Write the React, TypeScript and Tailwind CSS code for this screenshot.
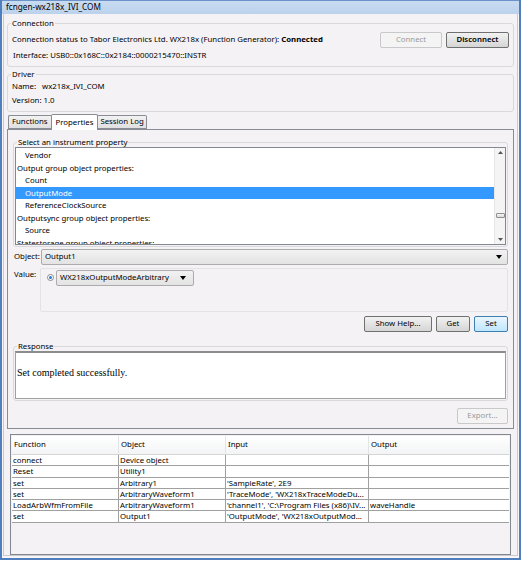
import React from 'react';

const font = { fontFamily: '"Noto Sans", "Liberation Sans", sans-serif' };

function Btn({ children, disabled, primary, className = '' }: { children: React.ReactNode; disabled?: boolean; primary?: boolean; className?: string }) {
    const base = 'h-[16px] rounded-[2px] border text-[7.8px] flex items-center justify-center';
    const look = disabled
        ? 'border-[#c9c9c9] bg-[#f4f4f4] text-[#9a9a9a]'
        : primary
          ? 'border-[#3c7fb1] bg-gradient-to-b from-[#eaf6fd] to-[#bee6fd] text-black'
          : 'border-[#707070] bg-gradient-to-b from-[#f2f2f2] to-[#d5d5d5] text-black';
    return <div className={`${base} ${look} ${className}`}>{children}</div>;
}

function Caret() {
    return (
        <svg width="6" height="4" viewBox="0 0 6 4">
            <path d="M0 0h6L3 4z" fill="#000" />
        </svg>
    );
}

const listItems: { text: string; indent?: boolean; selected?: boolean }[] = [
    { text: 'Vendor', indent: true },
    { text: 'Output group object properties:' },
    { text: 'Count', indent: true },
    { text: 'OutputMode', indent: true, selected: true },
    { text: 'ReferenceClockSource', indent: true },
    { text: 'Outputsync group object properties:' },
    { text: 'Source', indent: true },
    { text: 'Statestorage group object properties:' },
];

const rows = [
    ['connect', 'Device object', '', ''],
    ['Reset', 'Utility1', '', ''],
    ['set', 'Arbitrary1', "'SampleRate', 2E9", ''],
    ['set', 'ArbitraryWaveform1', "'TraceMode', 'WX218xTraceModeDu...", ''],
    ['LoadArbWfmFromFile', 'ArbitraryWaveform1', "'channel1', 'C:\\Program Files (x86)\\IV...", 'waveHandle'],
    ['set', 'Output1', "'OutputMode', 'WX218xOutputMod...", ''],
];

export default function App() {
    return (
        <div className="w-[523px] h-[562px] bg-white" style={font}>
            <div className="w-[521px] h-[560px] border-2 border-t-0 border-[#4f7fbf] bg-[#f8f6f9] flex flex-col">
                {/* title bar */}
                <div className="h-[15px] bg-gradient-to-b from-[#c8dbf1] to-[#bcd2ec] border-t border-[#6b93c9] flex items-center pl-[4px] text-[8.2px] text-black">
                    fcngen-wx218x_IVI_COM
                </div>

                <div className="flex-1 mx-px mb-[2px] bg-[#f4f2f4] border border-[#c9c9cc] border-t-0 flex flex-col px-[3px] text-[7.8px] text-black">
                    {/* Connection */}
                    <fieldset className="mt-[4px] border border-[#d9d9dc] rounded-[3px] px-[4px] pb-[3px] h-[49px]">
                        <legend className="px-px ml-[-1px] leading-[10px]">Connection</legend>
                        <div className="flex items-center h-[19px] mt-[2px]">
                            <div className="flex-1">
                                Connection status to Tabor Electronics Ltd. WX218x (Function Generator): <b>Connected</b>
                            </div>
                            <Btn disabled className="w-[62px]">Connect</Btn>
                            <Btn className="w-[63px] ml-[4px] font-semibold">Disconnect</Btn>
                        </div>
                        <div className="h-[14px] flex items-center pl-px">Interface: USB0::0x168C::0x2184::0000215470::INSTR</div>
                    </fieldset>

                    {/* Driver */}
                    <fieldset className="mt-[2px] border border-[#d9d9dc] rounded-[3px] px-[4px] h-[43px]">
                        <legend className="px-px ml-[-1px] leading-[10px]">Driver</legend>
                        <div className="h-[14px] mt-px flex items-center">
                            <span className="w-[30px] shrink-0">Name:</span>wx218x_IVI_COM
                        </div>
                        <div className="h-[13px] flex items-center">Version: 1.0</div>
                    </fieldset>

                    {/* Tabs */}
                    <div className="flex items-end h-[17px] pl-[1px]">
                        <div className="h-[14px] px-[3px] border border-[#898c95] border-r-0 rounded-tl-[2px] bg-gradient-to-b from-[#f2f2f2] to-[#e0e0e0] flex items-center">Functions</div>
                        <div className="h-[16px] px-[4px] border border-[#898c95] border-b-0 rounded-t-[2px] bg-white flex items-center z-10 -mb-px">Properties</div>
                        <div className="h-[14px] px-[2px] border border-[#898c95] border-l-0 rounded-tr-[2px] bg-gradient-to-b from-[#f2f2f2] to-[#e0e0e0] flex items-center">Session Log</div>
                    </div>
                    <div className="h-[300px] border border-[#898c95] bg-[#f4f2f4] px-[5px] flex flex-col">
                        <fieldset className="border border-[#d9d9dc] rounded-[3px] px-px mt-[7px] pb-px">
                            <legend className="px-px ml-[2px] leading-[10px]">Select an instrument property</legend>
                            <div className="h-[98px] border border-[#828790] bg-white flex overflow-hidden">
                                <div className="flex-1 overflow-hidden">
                                    {listItems.map((it, i) => (
                                        <div
                                            key={i}
                                            className={`h-[12.5px] leading-[12.5px] whitespace-nowrap ${it.indent ? 'pl-[9px]' : 'pl-[1px]'} ${it.selected ? 'bg-[#3399ff] text-white' : ''} ${i === 0 ? 'mt-px' : ''}`}
                                        >
                                            {it.text}
                                        </div>
                                    ))}
                                </div>
                                <div className="w-[11px] bg-[#f4f4f4] border-l border-[#e6e6e6] flex flex-col items-center justify-between py-[3px]">
                                    <svg width="5" height="3" viewBox="0 0 5 3"><path d="M0 3h5L2.5 0z" fill="#555" /></svg>
                                    <div className="flex-1 flex items-end pb-[20px]">
                                        <div className="w-[9px] h-[5px] border border-[#8f8f8f] rounded-[1px] bg-gradient-to-b from-[#f6f6f6] to-[#dadada]" />
                                    </div>
                                    <svg width="5" height="3" viewBox="0 0 5 3"><path d="M0 0h5L2.5 3z" fill="#555" /></svg>
                                </div>
                            </div>
                        </fieldset>

                        <div className="flex items-center mt-[2px] h-[16px]">
                            <span className="w-[28px] pl-px">Object:</span>
                            <div className="flex-1 h-[16px] border border-[#acacac] rounded-[2px] bg-gradient-to-b from-[#f2f2f2] to-[#e3e3e3] flex items-center justify-between pl-[3px] pr-[5px]">
                                <span>Output1</span>
                                <Caret />
                            </div>
                        </div>

                        <div className="flex mt-[3px]">
                            <span className="w-[27px] pl-px pt-[1px]">Value:</span>
                            <div className="flex-1 h-[44px] border border-[#e3e3e6] rounded-[2px] flex items-start pt-px pl-[6px]">
                                <div className="h-[15px] flex items-center">
                                    <div className="w-[7px] h-[7px] rounded-full border border-[#8a8a8a] bg-white flex items-center justify-center">
                                        <div className="w-[3px] h-[3px] rounded-full bg-[#1e7fd9]" />
                                    </div>
                                </div>
                                <div className="ml-[2px] w-[138px] h-[16px] border border-[#acacac] rounded-[2px] bg-gradient-to-b from-[#f2f2f2] to-[#e3e3e3] flex items-center justify-between pl-[3px] pr-[7px]">
                                    <span>WX218xOutputModeArbitrary</span>
                                    <Caret />
                                </div>
                            </div>
                        </div>

                        <div className="flex justify-end mt-[4px] gap-[4px]">
                            <Btn className="w-[68px]">Show Help...</Btn>
                            <Btn className="w-[34px]">Get</Btn>
                            <Btn primary className="w-[34px]">Set</Btn>
                        </div>

                        <fieldset className="border border-[#d9d9dc] rounded-[3px] px-px mt-[9px] pb-px">
                            <legend className="px-px ml-[2px] leading-[10px]">Response</legend>
                            <div className="h-[48px] border border-[#a0a0a0] border-t-[2px] border-t-[#8c8c8c] bg-white pt-[12px] pl-px text-[10px]" style={{ fontFamily: '"Liberation Serif", serif' }}>
                                Set completed successfully.
                            </div>
                        </fieldset>

                        <div className="flex justify-end mt-[7px]">
                            <Btn disabled className="w-[51px]">Export...</Btn>
                        </div>
                    </div>

                    {/* Log table */}
                    <div className="mt-[5px] mx-[3px] h-[121px] border border-[#828790] bg-[#f4f2f4] p-px">
                        <div className="grid grid-cols-[106px_107px_143px_1fr] h-[19px] bg-gradient-to-b from-white to-[#f3f4f6] border-b border-[#d5d5d5]">
                            {['Function', 'Object', 'Input', 'Output'].map((h, i) => (
                                <div key={h} className={`flex items-center pl-[2px] ${i > 0 ? 'border-l border-[#e3e4e6]' : ''}`}>
                                    {h}
                                </div>
                            ))}
                        </div>
                        {rows.map((r, ri) => (
                            <div key={ri} className="grid grid-cols-[106px_107px_143px_1fr] h-[11.3px] bg-white border-b border-[#a0a0a0]">
                                {r.map((c, ci) => (
                                    <div key={ci} className={`leading-[10px] whitespace-nowrap overflow-hidden ${ci > 0 ? 'border-l border-[#a0a0a0]' : ''} pl-px`}>
                                        {c}
                                    </div>
                                ))}
                            </div>
                        ))}
                    </div>
                </div>
            </div>
        </div>
    );
}
